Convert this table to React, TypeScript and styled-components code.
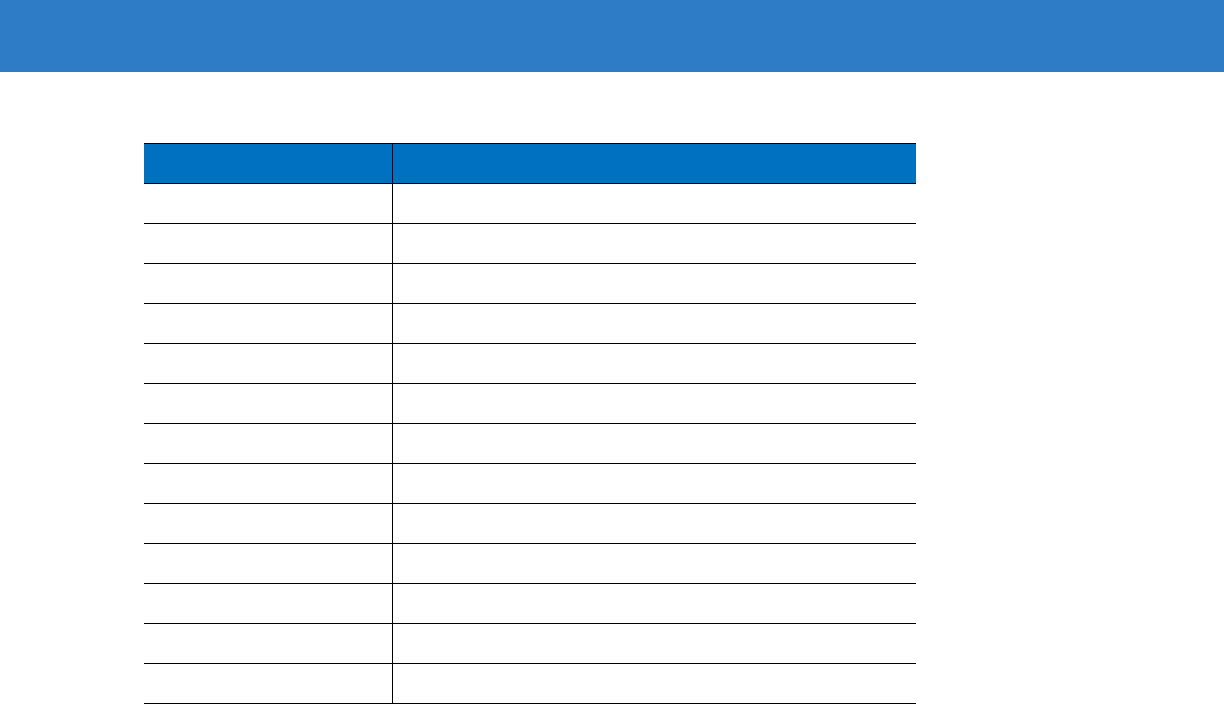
import styled, { createGlobalStyle } from "styled-components";

const GlobalStyle = createGlobalStyle`
  html, body {
    margin: 0;
    padding: 0;
    background: #ffffff;
    font-family: "Liberation Sans", Arial, sans-serif;
  }
`;

const Page = styled.div`
  width: 1224px;
  min-height: 704px;
  background: #ffffff;
`;

const Banner = styled.header`
  height: 72px;
  background: #2e7bc6;
`;

const Content = styled.main`
  padding: 71px 0 0 144px;
`;

const Table = styled.div`
  width: 772px;
  display: flex;
  flex-direction: column;
`;

const Row = styled.div<{ $head?: boolean }>`
  display: grid;
  grid-template-columns: 249px 1fr;
  height: ${(p) => (p.$head ? "41px" : "40px")};
  box-sizing: border-box;
  border-top: ${(p) => (p.$head ? "1px solid #000" : "none")};
  border-bottom: 1px solid #000;
  background: ${(p) => (p.$head ? "#0070c0" : "#ffffff")};
  color: ${(p) => (p.$head ? "#ffffff" : "#000000")};
  font-size: 13px;
`;

const Cell = styled.div<{ $first?: boolean }>`
  display: flex;
  align-items: center;
  padding: 0 8px;
  border-right: ${(p) => (p.$first ? "1px solid #000" : "none")};
`;

const BODY_ROWS = 13;

export default function App() {
  return (
    <Page>
      <GlobalStyle />
      <Banner />
      <Content>
        <Table>
          <Row $head>
            <Cell $first />
            <Cell />
          </Row>
          {Array.from({ length: BODY_ROWS }, (_, i) => (
            <Row key={i}>
              <Cell $first />
              <Cell />
            </Row>
          ))}
        </Table>
      </Content>
    </Page>
  );
}
